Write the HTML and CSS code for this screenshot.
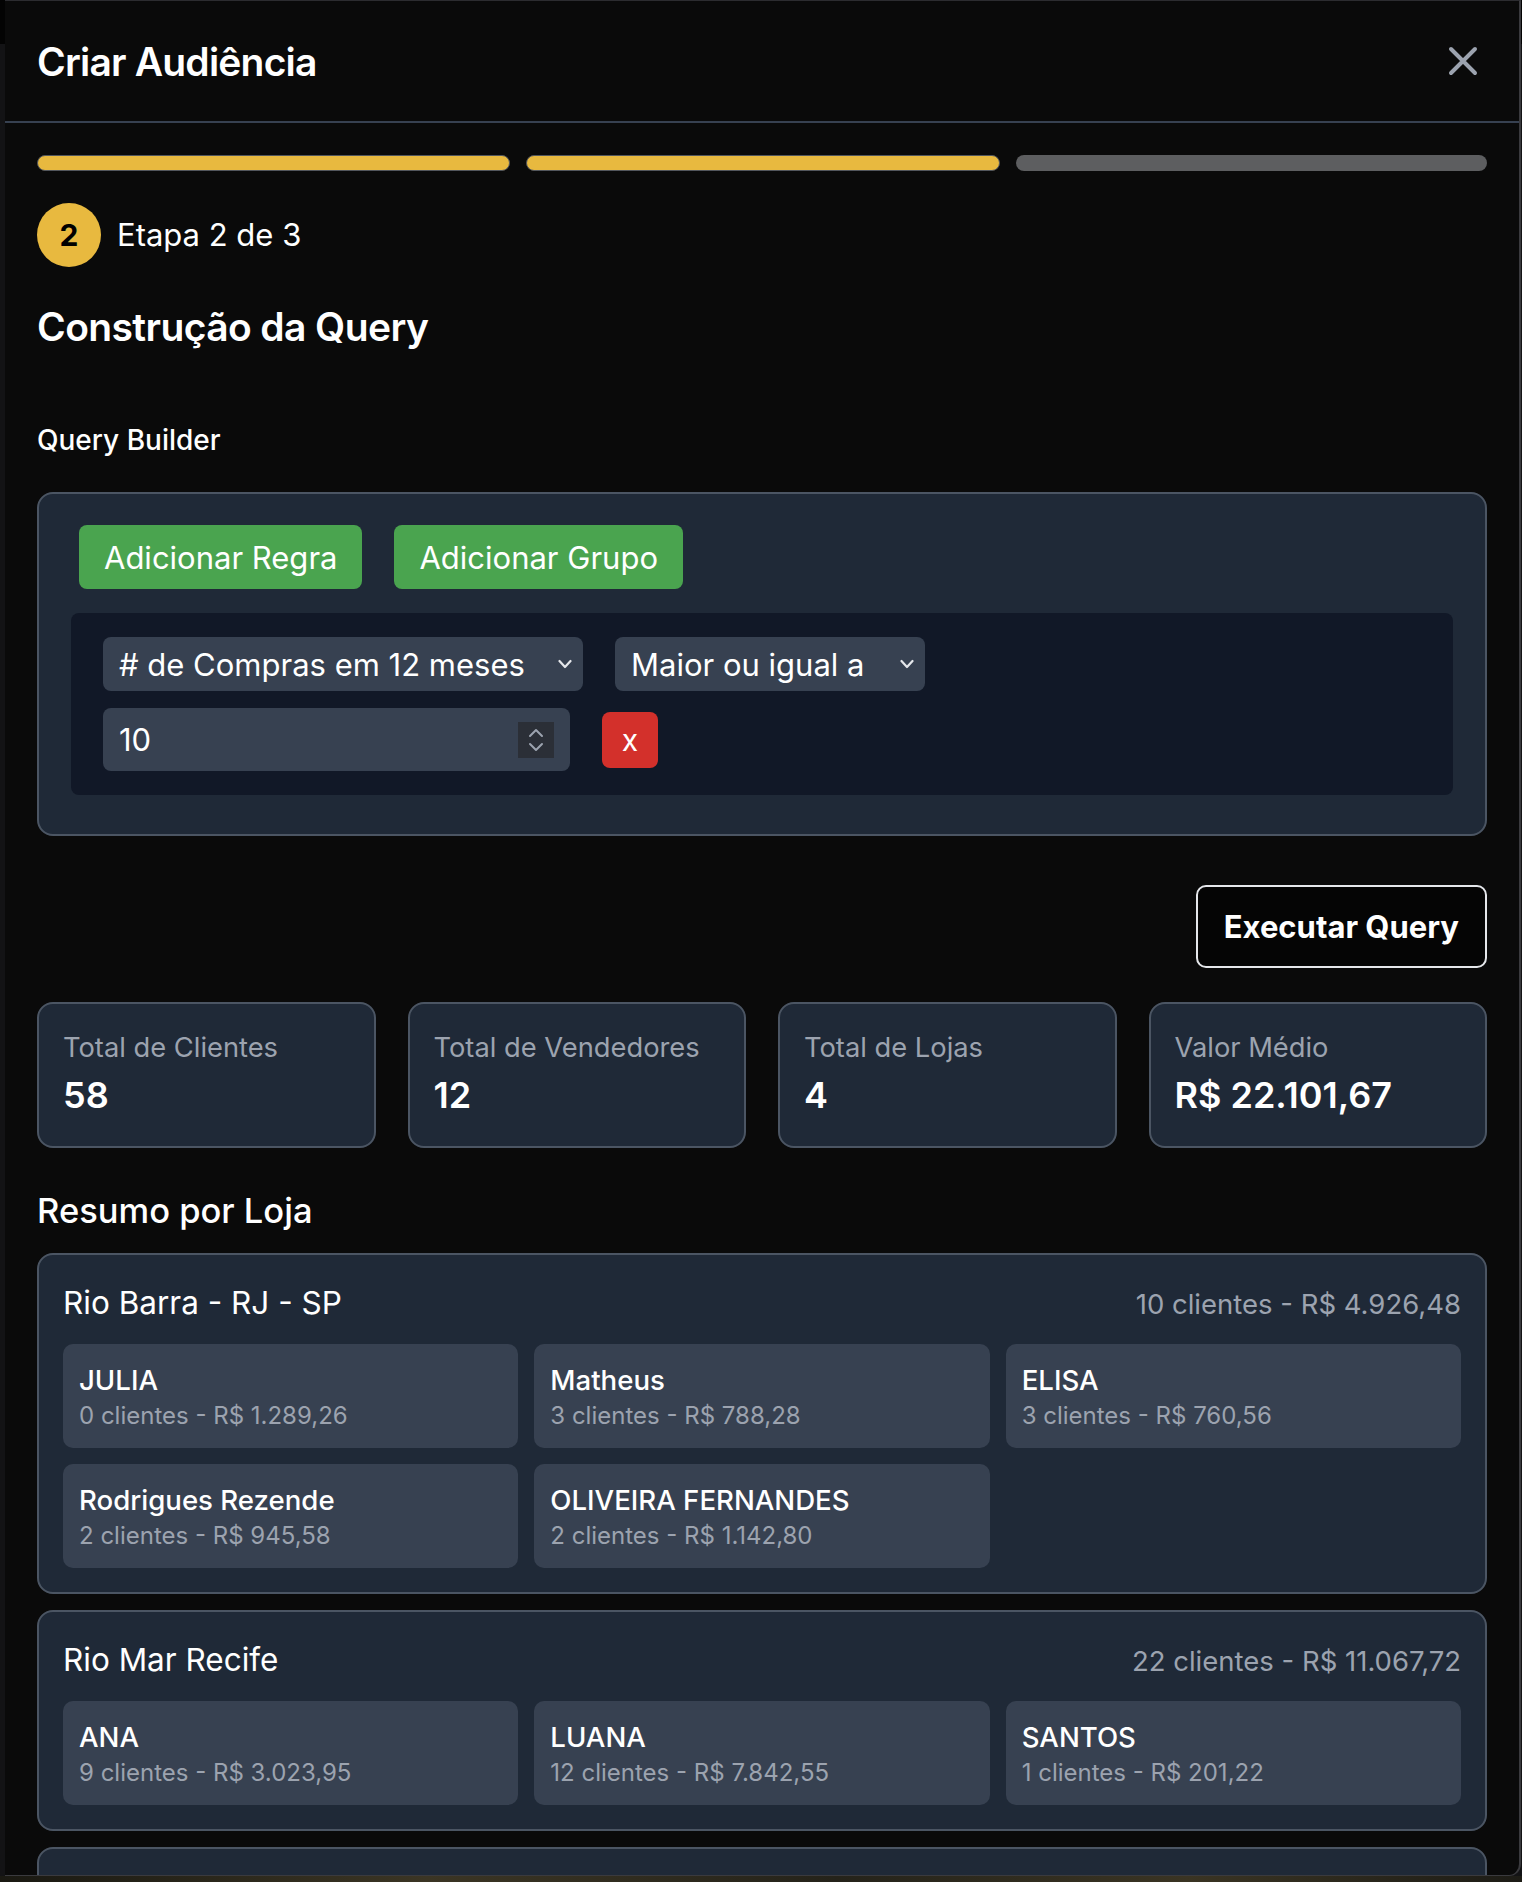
FILE: index.html
```html
<!DOCTYPE html>
<html lang="pt-BR">
<head>
<meta charset="utf-8">
<title>Criar Audiência</title>
<link rel="stylesheet" href="styles.css">
</head>
<body>
<div class="backdrop">
  <div class="modal">
    <header class="modal-header">
      <h1 class="modal-title">Criar Audiência</h1>
      <button class="close-btn" aria-label="Fechar">
        <svg width="48" height="48" viewBox="0 0 24 24" fill="none" stroke="#9ca3af" stroke-width="2" stroke-linecap="round" stroke-linejoin="round"><path d="M6 18L18 6M6 6l12 12"/></svg>
      </button>
    </header>
    <div class="modal-body">
      <div class="progress">
        <div class="progress-seg done"></div>
        <div class="progress-seg done"></div>
        <div class="progress-seg"></div>
      </div>
      <div class="step">
        <span class="step-num">2</span>
        <span class="step-label">Etapa 2 de 3</span>
      </div>
      <h2 class="section-title">Construção da Query</h2>
      <div class="field-label">Query Builder</div>
      <div class="qb">
        <div class="qb-actions">
          <button class="btn-green">Adicionar Regra</button>
          <button class="btn-green">Adicionar Grupo</button>
        </div>
        <div class="qb-group">
          <div class="qb-row">
            <div class="select sel-field">
              <span># de Compras em 12 meses</span>
              <svg class="chev" width="14" height="10" viewBox="0 0 14 10" fill="none" stroke="#e5e7eb" stroke-width="2.2" stroke-linecap="round" stroke-linejoin="round"><path d="M1.5 2l5.5 6 5.5-6"/></svg>
            </div>
            <div class="select sel-op">
              <span>Maior ou igual a</span>
              <svg class="chev" width="14" height="10" viewBox="0 0 14 10" fill="none" stroke="#e5e7eb" stroke-width="2.2" stroke-linecap="round" stroke-linejoin="round"><path d="M1.5 2l5.5 6 5.5-6"/></svg>
            </div>
          </div>
          <div class="qb-row row2">
            <div class="num-input">
              <span>10</span>
              <span class="spinner">
                <svg width="36" height="36" viewBox="0 0 36 36" fill="none" stroke="#9ca3af" stroke-width="2" stroke-linecap="round" stroke-linejoin="round"><path d="M12 14l6-6 6 6"/><path d="M12 22l6 6 6-6"/></svg>
              </span>
            </div>
            <button class="btn-remove">x</button>
          </div>
        </div>
      </div>
      <div class="run-row"><button class="btn-run">Executar Query</button></div>
      <div class="stats">
        <div class="stat"><div class="stat-label">Total de Clientes</div><div class="stat-value">58</div></div>
        <div class="stat"><div class="stat-label">Total de Vendedores</div><div class="stat-value">12</div></div>
        <div class="stat"><div class="stat-label">Total de Lojas</div><div class="stat-value">4</div></div>
        <div class="stat"><div class="stat-label">Valor Médio</div><div class="stat-value">R$ 22.101,67</div></div>
      </div>
      <h3 class="summary-title">Resumo por Loja</h3>
      <div class="stores">
        <section class="store">
          <div class="store-head"><span class="store-name">Rio Barra - RJ - SP</span><span class="store-total">10 clientes - R$ 4.926,48</span></div>
          <div class="sellers">
            <div class="seller"><div class="seller-name">JULIA</div><div class="seller-info">0 clientes - R$ 1.289,26</div></div>
            <div class="seller"><div class="seller-name">Matheus</div><div class="seller-info">3 clientes - R$ 788,28</div></div>
            <div class="seller"><div class="seller-name">ELISA</div><div class="seller-info">3 clientes - R$ 760,56</div></div>
            <div class="seller"><div class="seller-name">Rodrigues Rezende</div><div class="seller-info">2 clientes - R$ 945,58</div></div>
            <div class="seller"><div class="seller-name">OLIVEIRA FERNANDES</div><div class="seller-info">2 clientes - R$ 1.142,80</div></div>
          </div>
        </section>
        <section class="store">
          <div class="store-head"><span class="store-name">Rio Mar Recife</span><span class="store-total">22 clientes - R$ 11.067,72</span></div>
          <div class="sellers">
            <div class="seller"><div class="seller-name">ANA</div><div class="seller-info">9 clientes - R$ 3.023,95</div></div>
            <div class="seller"><div class="seller-name">LUANA</div><div class="seller-info">12 clientes - R$ 7.842,55</div></div>
            <div class="seller"><div class="seller-name">SANTOS</div><div class="seller-info">1 clientes - R$ 201,22</div></div>
          </div>
        </section>
        <section class="store store-empty"></section>
      </div>
    </div>
  </div>
  <div class="bottom-strip"></div>
</div>
</body>
</html>
```
FILE: styles.css
```css
* { box-sizing: border-box; margin: 0; padding: 0; }
html, body { background: #121214; }
body {
  font-family: Inter, "Noto Sans", sans-serif;
  color: #ffffff;
  width: 1522px;
  height: 1882px;
  overflow: hidden;
}
button { font-family: inherit; cursor: pointer; }

.backdrop {
  height: 1882px;
  display: flex;
  flex-direction: column;
  background: linear-gradient(#030303 0 44px, #131315 44px);
}
.modal {
  flex: none;
  margin-left: 5px;
  width: 1516px;
  height: 1876px;
  background: #0a0a0a;
  border-top: 1px solid #2c2c30;
  border-right: 2px solid #3a3a3e;
  border-bottom: 1px solid #3a3a3e;
  border-bottom-right-radius: 12px;
  overflow: hidden;
}
.bottom-strip {
  flex: 1;
  background: linear-gradient(90deg, #1a1912, #3b3524 28%, #25231a 55%, #3a3423 78%, #1d1c16);
}

.modal-header {
  height: 122px;
  border-bottom: 2px solid #374151;
  padding: 0 32px;
  display: flex;
  align-items: center;
  justify-content: space-between;
}
.modal-title {
  font-size: 39px;
  letter-spacing: -0.8px;
  line-height: 1;
  font-weight: 600;
}
.close-btn {
  background: none;
  border: 0;
  width: 48px;
  height: 48px;
  display: flex;
}

.modal-body { padding: 32px 32px 0; }

.progress { display: flex; gap: 16px; }
.progress-seg {
  flex: 1;
  height: 16px;
  border-radius: 8px;
  background: #5d5e60;
}
.progress-seg.done {
  background: #e8b93f;
  border: 1px solid #52565c;
}

.step {
  margin-top: 32px;
  display: flex;
  align-items: center;
  gap: 16px;
}
.step-num {
  width: 64px;
  height: 64px;
  border-radius: 50%;
  background: #e8b93f;
  color: #000;
  font-size: 30px;
  font-weight: 700;
  display: flex;
  align-items: center;
  justify-content: center;
}
.step-label { font-size: 31px; line-height: 40px; }

.section-title {
  margin-top: 32px;
  font-size: 39px;
  letter-spacing: -0.6px;
  line-height: 56px;
  font-weight: 600;
}
.field-label {
  margin-top: 65px;
  font-size: 28px;
  line-height: 40px;
  font-weight: 500;
}

.qb {
  margin-top: 32px;
  background: #1f2937;
  border: 2px solid #4b5563;
  border-radius: 16px;
  padding: 31px 32px 39px;
}
.qb-actions { display: flex; gap: 32px; padding-left: 8px; }
.btn-green {
  height: 64px;
  padding: 0 25px;
  background: #4aa44f;
  color: #fff;
  border: 0;
  border-radius: 8px;
  font-size: 31px;
  font-weight: 400;
}
.qb-group {
  margin-top: 24px;
  background: #111827;
  border-radius: 8px;
  padding: 24px 32px;
}
.qb-row { display: flex; align-items: center; gap: 32px; }
.row2 { margin-top: 17px; }
.select {
  height: 54px;
  background: #374151;
  border-radius: 8px;
  display: flex;
  align-items: center;
  justify-content: space-between;
  padding: 0 11px 0 16px;
  font-size: 31px;
}
.sel-field { width: 480px; }
.sel-op { width: 310px; }
.num-input {
  width: 467px;
  height: 63px;
  background: #374151;
  border-radius: 8px;
  display: flex;
  align-items: center;
  justify-content: space-between;
  padding: 0 16px;
  font-size: 31px;
}
.spinner {
  width: 36px;
  height: 36px;
  background: #2b2f37;
  display: flex;
}
.btn-remove {
  width: 56px;
  height: 56px;
  background: #d3302b;
  color: #fff;
  border: 0;
  border-radius: 8px;
  font-size: 30px;
  font-weight: 400;
}

.run-row { margin-top: 49px; display: flex; justify-content: flex-end; }
.btn-run {
  height: 83px;
  padding: 0 26px;
  border: 2px solid #e5e7eb;
  border-radius: 10px;
  background: #050505;
  color: #fff;
  font-size: 31px;
  font-weight: 700;
}

.stats {
  margin-top: 34px;
  display: grid;
  grid-template-columns: repeat(4, 1fr);
  gap: 32px;
}
.stat {
  background: #1f2937;
  border: 2px solid #4b5563;
  border-radius: 16px;
  padding: 24px;
}
.stat-label { font-size: 27.3px; line-height: 40px; color: #9ca3af; }
.stat-value { font-size: 36px; line-height: 54px; font-weight: 600; }

.summary-title {
  margin-top: 39px;
  font-size: 34.5px;
  line-height: 48px;
  font-weight: 500;
}
.stores {
  margin-top: 18px;
  display: flex;
  flex-direction: column;
  gap: 16px;
}
.store {
  background: #1f2937;
  border: 2px solid #4b5563;
  border-radius: 16px;
  padding: 24px;
}
.store-empty { min-height: 200px; }
.store-head {
  display: flex;
  justify-content: space-between;
  align-items: baseline;
  line-height: 47px;
}
.store-name { font-size: 31.5px; font-weight: 400; }
.store-total { font-size: 27.5px; color: #9ca3af; }
.sellers {
  margin-top: 16px;
  display: grid;
  grid-template-columns: repeat(3, 1fr);
  gap: 16px;
}
.seller {
  background: #374151;
  border-radius: 10px;
  padding: 16px;
}
.seller-name { font-size: 27.6px; line-height: 40px; font-weight: 500; }
.seller-info { font-size: 24px; line-height: 32px; color: #9ca3af; }
```
